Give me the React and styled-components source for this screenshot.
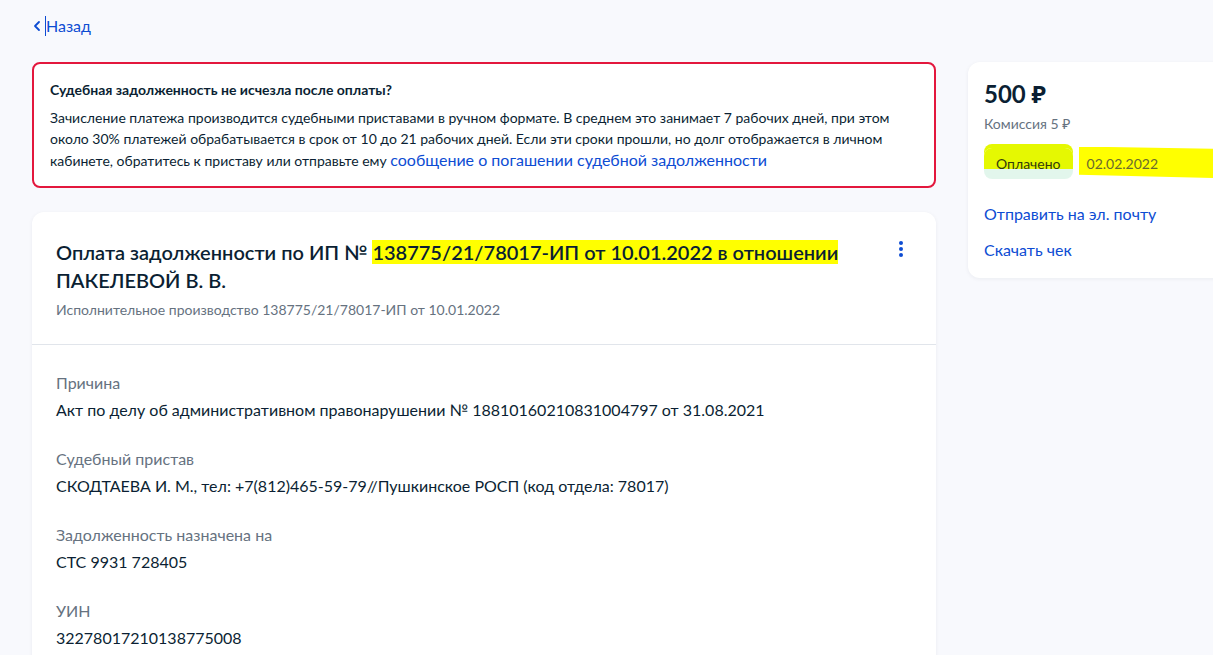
import React from "react";
import styled, { createGlobalStyle } from "styled-components";

const Global = createGlobalStyle`
  html, body { margin: 0; padding: 0; background: #f8f9fd; }
  body { font-family: Lato, "Noto Sans", sans-serif; color: #0b1f33; overflow: hidden; width: 1213px; height: 655px; }
  * { box-sizing: border-box; }
`;

const Page = styled.div`
  padding: 14px 0 0 32px;
  width: 1300px;
`;

const Back = styled.a`
  display: inline-flex;
  align-items: center;
  gap: 4px;
  color: #0d4cd3;
  font-size: 16px;
  line-height: 24px;
  text-decoration: none;
  margin-left: 1px;
`;

const Caret = styled.span`
  display: inline-block;
  width: 1px;
  height: 20px;
  background: #0d4cd3;
  margin-right: -4px;
`;

const Grid = styled.div`
  display: grid;
  grid-template-columns: 904px 300px;
  gap: 32px;
  margin-top: 24px;
  align-items: start;
`;

const Column = styled.div`
  display: flex;
  flex-direction: column;
  gap: 24px;
`;

const Alert = styled.div`
  border: 2px solid #e3173d;
  border-radius: 8px;
  background: #fff;
  padding: 16px 16px 15px 16px;
`;

const AlertTitle = styled.div`
  font-size: 14px;
  font-weight: 700;
  line-height: 20px;
  margin-bottom: 7px;
`;

const AlertText = styled.div`
  font-size: 14px;
  line-height: 21px;
`;

const Link = styled.a`
  color: #0d4cd3;
  text-decoration: none;
`;

const InlineLink = styled(Link)`
  font-size: 16px;
`;

const Card = styled.div`
  background: #fff;
  border-radius: 12px;
  box-shadow: 0 1px 4px rgba(11, 31, 51, 0.06);
`;

const CardHead = styled.div`
  display: flex;
  align-items: flex-start;
  justify-content: space-between;
  padding: 26px 24px 24px 24px;
  border-bottom: 1px solid #e1e5eb;
`;

const Heading = styled.h1`
  margin: 0;
  font-size: 20px;
  font-weight: 600;
  line-height: 28px;
  max-width: 800px;
`;

const Mark = styled.span`
  background: #ffff00;
`;

const Sub = styled.div`
  margin-top: 6px;
  font-size: 14px;
  line-height: 20px;
  color: #66727f;
`;

const Kebab = styled.button`
  border: 0;
  background: none;
  padding: 0;
  margin: 3px 9px 0 0;
  display: flex;
  flex-direction: column;
  gap: 2px;
  cursor: pointer;
`;

const Dot = styled.span`
  width: 4px;
  height: 4px;
  border-radius: 50%;
  background: #0d4cd3;
`;

const CardBody = styled.div`
  padding: 26px 24px 40px 24px;
  display: flex;
  flex-direction: column;
  gap: 25px;
`;

const Field = styled.div`
  display: flex;
  flex-direction: column;
  gap: 3px;
`;

const Label = styled.div`
  font-size: 16px;
  line-height: 24px;
  color: #66727f;
`;

const Value = styled.div`
  font-size: 16px;
  line-height: 24px;
`;

const Side = styled(Card)`
  padding: 16px 16px 16px 16px;
`;

const Amount = styled.div`
  font-size: 24px;
  font-weight: 700;
  line-height: 32px;
`;

const Fee = styled.div`
  font-size: 14px;
  line-height: 20px;
  color: #66727f;
  margin-top: 4px;
`;

const StatusRow = styled.div`
  display: flex;
  align-items: center;
  gap: 14px;
  margin-top: 14px;
`;

const Badge = styled.span`
  display: inline-block;
  font-size: 14px;
  line-height: 20px;
  padding: 6px 12px 5px;
  border-radius: 8px;
  background: linear-gradient(#e5f802 0 68%, #e2f6ec 68% 100%);
  color: #333b0b;
  box-shadow: 0 -4px 0 0 #e5f802;
`;

const DateMark = styled.span`
  font-size: 14px;
  line-height: 20px;
  color: #6a6a2e;
  background: #ffff00;
  padding: 7px 80px 5px 8px;
  margin-left: -8px;
  margin-top: -2px;
  clip-path: polygon(0 0, 100% 8%, 100% 100%, 0 88%);
`;

const Actions = styled.div`
  display: flex;
  flex-direction: column;
  gap: 12px;
  margin-top: 23px;
`;

const ActionLink = styled(Link)`
  font-size: 16px;
  line-height: 24px;
`;

const fields = [
  ["Причина", "Акт по делу об административном правонарушении № 18810160210831004797 от 31.08.2021"],
  ["Судебный пристав", "СКОДТАЕВА И. М., тел: +7(812)465-59-79//Пушкинское РОСП (код отдела: 78017)"],
  ["Задолженность назначена на", "СТС 9931 728405"],
  ["УИН", "32278017210138775008"],
];

export default function App() {
  return (
    <>
      <Global />
      <Page>
        <Back href="#">
          <svg width="8" height="12" viewBox="0 0 8 12" fill="none">
            <path d="M6 2L2 6l4 4" stroke="#0d4cd3" strokeWidth="1.8" strokeLinecap="round" strokeLinejoin="round" />
          </svg>
          <Caret />
          <span>Назад</span>
        </Back>
        <Grid>
          <Column>
            <Alert>
              <AlertTitle>Судебная задолженность не исчезла после оплаты?</AlertTitle>
              <AlertText>
                Зачисление платежа производится судебными приставами в ручном формате. В среднем это занимает 7 рабочих дней, при этом около 30% платежей обрабатывается в срок от 10 до 21 рабочих дней. Если эти сроки прошли, но долг отображается в личном кабинете, обратитесь к приставу или отправьте ему{" "}
                <InlineLink href="#">сообщение о погашении судебной задолженности</InlineLink>
              </AlertText>
            </Alert>
            <Card>
              <CardHead>
                <div>
                  <Heading>
                    Оплата задолженности по ИП № <Mark>138775/21/78017-ИП от 10.01.2022 в отношении</Mark> ПАКЕЛЕВОЙ В. В.
                  </Heading>
                  <Sub>Исполнительное производство 138775/21/78017-ИП от 10.01.2022</Sub>
                </div>
                <Kebab aria-label="Меню">
                  <Dot />
                  <Dot />
                  <Dot />
                </Kebab>
              </CardHead>
              <CardBody>
                {fields.map(([l, v]) => (
                  <Field key={l}>
                    <Label>{l}</Label>
                    <Value>{v}</Value>
                  </Field>
                ))}
              </CardBody>
            </Card>
          </Column>
          <Side>
            <Amount>500 ₽</Amount>
            <Fee>Комиссия 5 ₽</Fee>
            <StatusRow>
              <Badge>Оплачено</Badge>
              <DateMark>02.02.2022</DateMark>
            </StatusRow>
            <Actions>
              <ActionLink href="#">Отправить на эл. почту</ActionLink>
              <ActionLink href="#">Скачать чек</ActionLink>
            </Actions>
          </Side>
        </Grid>
      </Page>
    </>
  );
}
